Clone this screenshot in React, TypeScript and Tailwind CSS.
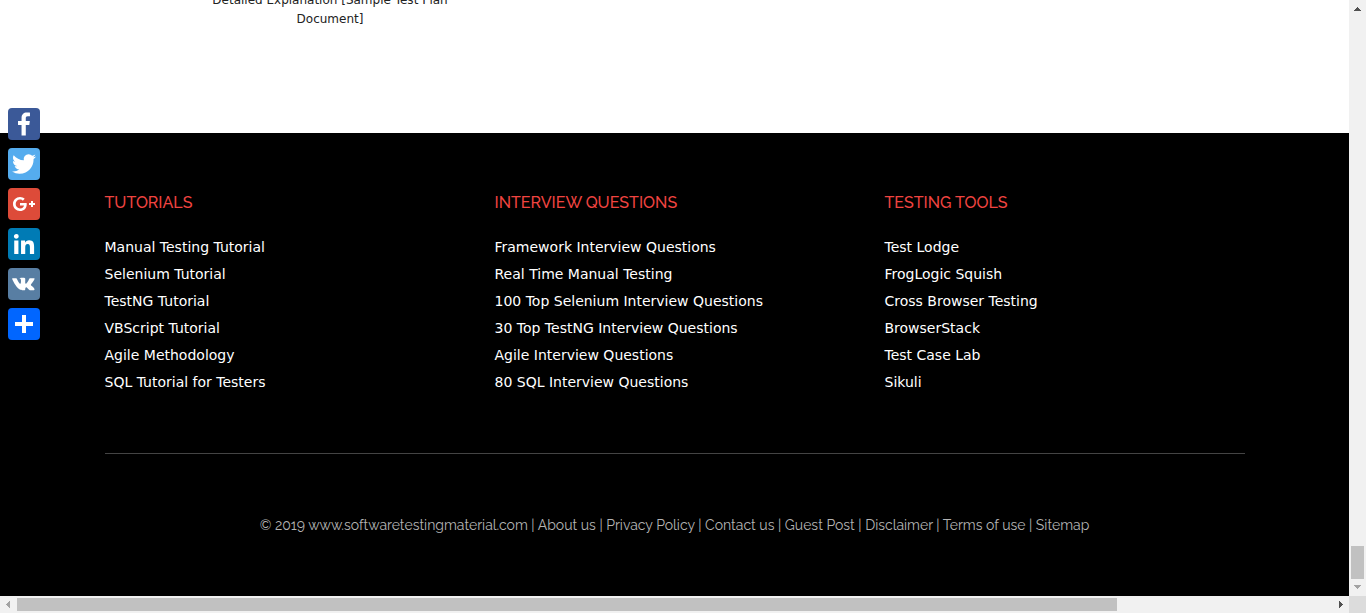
import React from "react";

const columns = [
  {
    title: "TUTORIALS",
    links: ["Manual Testing Tutorial", "Selenium Tutorial", "TestNG Tutorial", "VBScript Tutorial", "Agile Methodology", "SQL Tutorial for Testers"],
  },
  {
    title: "INTERVIEW QUESTIONS",
    links: ["Framework Interview Questions", "Real Time Manual Testing", "100 Top Selenium Interview Questions", "30 Top TestNG Interview Questions", "Agile Interview Questions", "80 SQL Interview Questions"],
  },
  {
    title: "TESTING TOOLS",
    links: ["Test Lodge", "FrogLogic Squish", "Cross Browser Testing", "BrowserStack", "Test Case Lab", "Sikuli"],
  },
];

const siteLinks = ["About us", "Privacy Policy", "Contact us", "Guest Post", "Disclaimer", "Terms of use", "Sitemap"];

const shares = [
  {
    name: "Facebook",
    color: "bg-[#3b5998]",
    box: "0 0 32 32",
    path: "M17.78 27.5V17.008h3.522l.527-4.09h-4.05v-2.61c0-1.182.33-1.99 2.023-1.99h2.166V4.66c-.375-.05-1.66-.16-3.155-.16-3.123 0-5.26 1.905-5.26 5.405v3.016h-3.53v4.09h3.53V27.5h4.223z",
  },
  {
    name: "Twitter",
    color: "bg-[#55acee]",
    box: "0 0 32 32",
    path: "M28 8.557a9.913 9.913 0 0 1-2.828.775 4.93 4.93 0 0 0 2.166-2.725 9.738 9.738 0 0 1-3.13 1.194 4.92 4.92 0 0 0-3.593-1.55 4.924 4.924 0 0 0-4.794 6.049c-4.09-.21-7.72-2.17-10.15-5.15a4.942 4.942 0 0 0-.665 2.477c0 1.71.87 3.214 2.19 4.1a4.968 4.968 0 0 1-2.23-.616v.06c0 2.39 1.7 4.38 3.952 4.83-.414.115-.85.174-1.297.174-.318 0-.626-.03-.928-.086a4.935 4.935 0 0 0 4.6 3.42 9.893 9.893 0 0 1-6.114 2.107c-.398 0-.79-.023-1.175-.068a13.953 13.953 0 0 0 7.55 2.213c9.056 0 14.01-7.507 14.01-14.013 0-.213-.005-.426-.015-.637.96-.695 1.795-1.56 2.455-2.55z",
  },
  {
    name: "Google+",
    color: "bg-[#dd4b39]",
    box: "0 0 32 32",
    path: "M27 15h-2v-2h-2v2h-2v2h2v2h2v-2h2m-15-2v2.4h3.97c-.16 1.03-1.2 3.02-3.97 3.02-2.39 0-4.34-1.98-4.34-4.42s1.95-4.42 4.34-4.42c1.36 0 2.27.58 2.79 1.08l1.9-1.83C15.47 9.69 13.89 9 12 9c-3.87 0-7 3.13-7 7s3.13 7 7 7c4.04 0 6.72-2.84 6.72-6.84 0-.46-.05-.81-.11-1.16H12z",
  },
  {
    name: "LinkedIn",
    color: "bg-[#007bb5]",
    box: "0 0 32 32",
    path: "M6.227 12.61h4.19v13.48h-4.19V12.61zm2.095-6.7a2.43 2.43 0 0 1 0 4.86c-1.344 0-2.428-1.09-2.428-2.43s1.084-2.43 2.428-2.43m4.72 6.7h4.02v1.84h.058c.56-1.058 1.927-2.176 3.965-2.176 4.238 0 5.02 2.792 5.02 6.42v7.395h-4.183v-6.56c0-1.564-.03-3.574-2.178-3.574-2.18 0-2.514 1.7-2.514 3.46v6.668h-4.187V12.61z",
  },
  {
    name: "VK",
    color: "bg-[#587ea3]",
    box: "-4 -5 40 40",
    path: "M16.563 22.73s.508-.055.767-.327c.24-.25.23-.72.23-.72s-.032-2.2 1.01-2.524c1.03-.318 2.354 2.127 3.756 3.07 1.06.714 1.866.557 1.866.557l3.75-.05s1.962-.118 1.032-1.62c-.076-.12-.542-1.114-2.788-3.154-2.35-2.134-2.035-1.79.795-5.48 1.724-2.247 2.413-3.62 2.197-4.207-.205-.56-1.473-.412-1.473-.412l-4.224.025s-.313-.04-.545.094c-.227.132-.373.44-.373.44s-.668 1.738-1.56 3.216c-1.88 3.12-2.632 3.284-2.94 3.09-.714-.45-.536-1.81-.536-2.777 0-3.02.468-4.28-.913-4.606-.458-.108-.795-.18-1.968-.19-1.504-.015-2.776.005-3.497.35-.48.23-.85.74-.624.77.278.038.908.167 1.242.613.43.576.415 1.87.415 1.87s.248 3.566-.58 4.008c-.567.304-1.345-.316-3.016-3.15-.855-1.45-1.502-3.053-1.502-3.053s-.124-.3-.347-.46c-.27-.195-.647-.257-.647-.257l-4.015.025s-.603.016-.824.274c-.197.23-.016.706-.016.706s3.143 7.226 6.702 10.868c3.263 3.34 6.968 3.12 6.968 3.12h1.68z",
  },
  {
    name: "Share",
    color: "bg-[#0166ff]",
    box: "0 0 32 32",
    path: "M14 7h4v18h-4z M7 14h18v4H7z",
  },
];

function ShareBar() {
  return (
    <nav aria-label="Share" className="absolute left-2 top-[108px] flex flex-col gap-2">
      {shares.map((s) => (
        <a key={s.name} href="#" aria-label={s.name} className={`block size-8 rounded-sm ${s.color}`}>
          <svg viewBox={s.box} className="size-8 fill-white">
            <path d={s.path} />
          </svg>
        </a>
      ))}
    </nav>
  );
}

function Footer() {
  return (
    <footer className="bg-black px-5 pt-[58px] pb-[59px]">
      <div className="mx-auto max-w-[1140px]">
        <div className="grid grid-cols-3 gap-x-[30px] border-b border-[#444] pb-[57px]">
          {columns.map((c) => (
            <section key={c.title}>
              <h4 className="mb-[19px] font-['Raleway','Lato',sans-serif] text-[16px] leading-6 font-medium text-[#f04440]">{c.title}</h4>
              <ul className="font-['Verdana','DejaVu_Sans',sans-serif] text-[14px] leading-[27px] text-white">
                {c.links.map((l) => (
                  <li key={l}>
                    <a href="#">{l}</a>
                  </li>
                ))}
              </ul>
            </section>
          ))}
        </div>
        <p className="mt-[59px] text-center font-['Raleway','Lato',sans-serif] text-[14px] leading-6 text-[#b4b4b4]">
          © 2019 www.softwaretestingmaterial.com
          {siteLinks.map((l) => (
            <React.Fragment key={l}>
              {" | "}
              <a href="#">{l}</a>
            </React.Fragment>
          ))}
        </p>
      </div>
    </footer>
  );
}

export default function App() {
  return (
    <div className="grid h-screen grid-cols-[minmax(0,1fr)_17px] grid-rows-[minmax(0,1fr)_17px] bg-white">
      <div className="relative flex flex-col overflow-hidden">
        <main className="flex min-h-0 flex-1 flex-col justify-end overflow-hidden pb-[104px] pl-[200px]">
          <p className="w-[260px] shrink-0 text-center font-['Verdana','DejaVu_Sans',sans-serif] text-[12px] leading-[19px] text-[#222]">
            <a href="#">Detailed Explanation [Sample Test Plan Document]</a>
          </p>
        </main>
        <Footer />
        <ShareBar />
      </div>
      <div aria-hidden="true" className="flex flex-col items-center justify-between bg-[#f1f1f1] pt-[7px] pb-[7px]">
        <svg viewBox="0 0 7 4" className="h-1 w-[7px] fill-[#505050]" shapeRendering="crispEdges">
          <path d="M3 0h1v1h1v1h1v1h1v1H0V3h1V2h1V1h1z" />
        </svg>
        <div className="flex flex-col items-center gap-[6px]">
          <div className="h-[33px] w-[13px] bg-[#c1c1c1]" />
          <svg viewBox="0 0 7 4" className="h-1 w-[7px] fill-[#a3a3a3]" shapeRendering="crispEdges">
            <path d="M0 0h7v1H6v1H5v1H4v1H3V3H2V2H1V1H0z" />
          </svg>
        </div>
      </div>
      <div aria-hidden="true" className="flex items-center bg-[#f1f1f1] px-[6px]">
        <svg viewBox="0 0 4 7" className="h-[7px] w-1 fill-[#a3a3a3]" shapeRendering="crispEdges">
          <path d="M4 0v7H3V6H2V5H1V4H0V3h1V2h1V1h1V0z" />
        </svg>
        <div className="grid flex-1 grid-cols-[1100fr_215fr] px-[7px]">
          <div className="h-[13px] bg-[#c1c1c1]" />
        </div>
        <svg viewBox="0 0 4 7" className="h-[7px] w-1 fill-[#505050]" shapeRendering="crispEdges">
          <path d="M0 0v7h1V6h1V5h1V4h1V3H3V2H2V1H1V0z" />
        </svg>
      </div>
      <div className="bg-[#dcdcdc]" />
    </div>
  );
}
